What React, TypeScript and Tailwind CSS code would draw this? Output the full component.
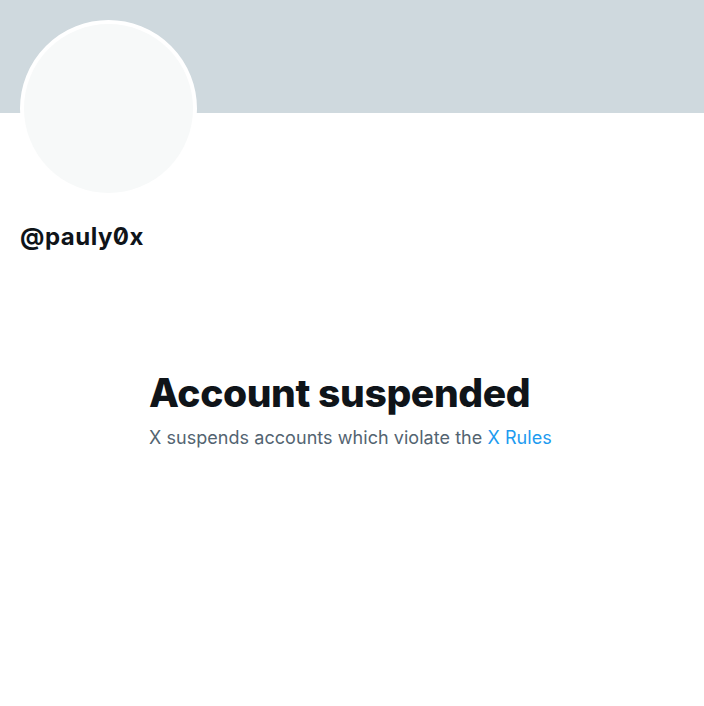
export default function App() {
  return (
    <div className="min-h-[706px] w-[704px] bg-white font-['Inter','Liberation_Sans',sans-serif] text-[#0f1419]">
      <div className="h-[113px] bg-[#cfd9de]" />
      <div className="px-[20px]">
        <div className="-mt-[93px] h-[177px] w-[177px] rounded-full border-[4px] border-white bg-[#f7f9f9]" />
        <div className="mt-[26px] text-[24px] font-bold leading-[28px] tracking-[0.5px] [font-feature-settings:'zero']">@pauly0x</div>
      </div>
      <div className="mx-auto mt-[119px] w-[406px]">
        <h1 className="text-[39px] font-extrabold leading-[46px] tracking-[-0.4px]">Account suspended</h1>
        <p className="mt-[10px] text-[18px] leading-[24px] tracking-[0.05px] text-[#536471]">
          X suspends accounts which violate the <span className="text-[#1d9bf0]">X Rules</span>
        </p>
      </div>
    </div>
  );
}
